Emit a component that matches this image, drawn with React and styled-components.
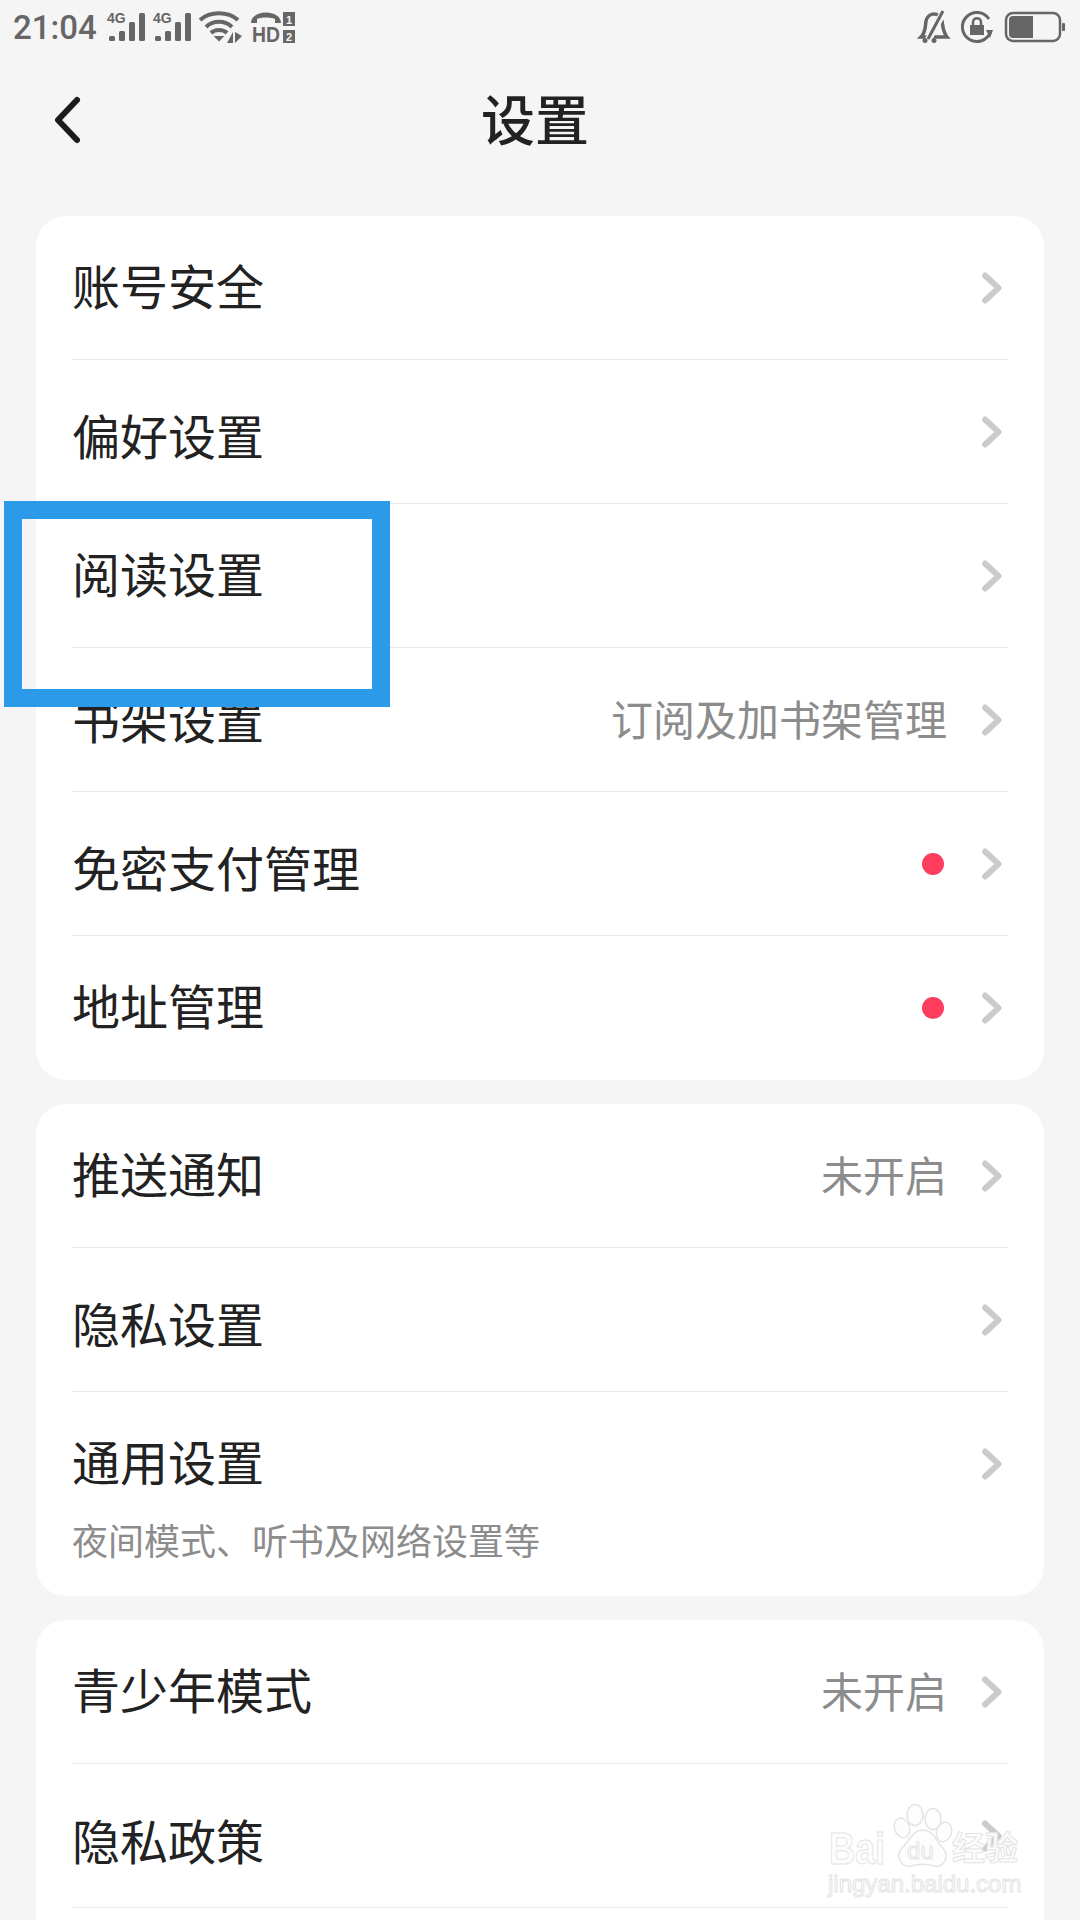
import React from 'react';
import styled, { createGlobalStyle } from 'styled-components';

const Global = createGlobalStyle`
html,body{margin:0;padding:0;background:#f5f5f5;}
`;
const Page = styled.div`
position:relative;
width:1080px;
height:1920px;
overflow:hidden;
background:#f5f5f5;
font-family:"Noto Sans CJK SC","Liberation Sans",sans-serif;
`;
const StatusBar = styled.div`
height:60px;
box-sizing:border-box;
display:flex;
align-items:center;
justify-content:space-between;
padding:0 15px 6px 13px;
color:#666;
svg{overflow:visible;}
`;
const StatusGroup = styled.div`
display:flex;
align-items:center;
gap:${p => p.$gap}px;
`;
const Clock = styled.span`
font-family:Roboto,"Liberation Sans",sans-serif;
font-size:33px;
font-weight:500;
margin-right:2px;
`;
const Header = styled.div`
height:120px;
margin-bottom:36px;
display:grid;
grid-template-columns:1fr auto 1fr;
align-items:center;
`;
const BackBtn = styled.svg`
margin-left:50px;
`;
const Title = styled.h1`
margin:0 10px 5px 0;
font-size:54px;
font-weight:500;
color:#222;
line-height:1;
`;
const Card = styled.div`
margin:0 36px ${p => p.$mb || 0}px;
background:#fff;
border-radius:30px;
padding:0 36px;
`;
const Row = styled.div`
box-sizing:border-box;
height:${p => p.$h || 144}px;
border-bottom:${p => p.$last ? 'none' : '1px solid #e9e9e9'};
`;
const RowMain = styled.div`
height:143px;
display:flex;
align-items:center;
`;
const RowLabel = styled.span`
font-size:48px;
color:#222;
line-height:1;
flex:1;
position:relative;
top:${p => p.$shift}px;
`;
const Sub = styled.div`
margin-top:-14px;
font-size:36px;
line-height:1;
color:#8c8c8c;
`;
const Note = styled.span`
font-size:42px;
line-height:1;
color:#8c8c8c;
margin-right:35px;
position:relative;
top:-2px;
`;
const Dot = styled.span`
width:22px;
height:22px;
border-radius:50%;
background:#ff3d5c;
margin-right:38px;
`;
const Chevron = styled.svg`
margin-right:6px;
flex:none;
`;
const Highlight = styled.div`
position:absolute;
left:4px;
top:501px;
width:386px;
height:206px;
box-sizing:border-box;
border:18px solid #2b9ae9;
`;
const Watermark = styled.div`
position:absolute;
left:826px;
top:1802px;
width:224px;
`;
const PawMark = styled.svg`
position:absolute;
left:64px;
top:-2px;
`;
const MarkLine = styled.div`
position:absolute;
white-space:nowrap;
line-height:1;
font-family:${p => p.$cjk ? '"Noto Sans CJK SC",sans-serif' : '"Liberation Sans",sans-serif'};
font-size:${p => p.$size}px;
left:${p => p.$x}px;
top:${p => p.$y}px;
font-weight:${p => p.$bold ? 700 : 400};
transform:scaleX(${p => p.$sx || 1});
transform-origin:left top;
color:#fdfdfd;
-webkit-text-stroke:1px #e4e4e4;
`;

const Arrow = () => (
  <Chevron width="20" height="32" viewBox="0 0 20 32" fill="none">
    <path d="M3 3.5 L16.5 16 L3 28.5" stroke="#cbcbcb" strokeWidth="6" strokeLinecap="round" strokeLinejoin="round" />
  </Chevron>
);

const Signal = () => (
  <svg width="38" height="30" viewBox="0 0 38 30" fill="#666">
    <text x="0" y="11" fontSize="14" fontWeight="700" fontFamily="Liberation Sans">4G</text>
    <rect x="2" y="24" width="6" height="5" rx="1.5" />
    <rect x="12" y="19" width="6" height="10" rx="1.5" />
    <rect x="22" y="10" width="6" height="19" rx="1.5" />
    <rect x="32" y="1" width="6" height="28" rx="1.5" />
  </svg>
);

const Wifi = () => (
  <svg width="44" height="32" viewBox="0 0 44 32" fill="none" stroke="#666" strokeWidth="4">
    <path d="M1 9 C11 0 29 0 39 9" />
    <path d="M7 16 C14 9 26 9 33 16" />
    <path d="M12 22 C16 18 24 18 28 22" />
    <path d="M17 26 L20 29 L23 26 Z" fill="#666" strokeWidth="2" />
    <path d="M34 21 L34 32 L28 32 Z M36 21 L36 32 L43 25 Z" fill="#666" stroke="none" />
  </svg>
);

const Hd = () => (
  <svg width="44" height="31" viewBox="0 0 44 31" fill="#666">
    <path d="M0 11 C0 -3 30 -3 30 11 L24 11 L24 7 C20 5 10 5 6 7 L6 11 Z" />
    <text x="1" y="30" fontSize="22" fontWeight="700" fontFamily="Liberation Sans" textLength="28" lengthAdjust="spacingAndGlyphs">HD</text>
    <rect x="32" y="0" width="12" height="14" />
    <rect x="32" y="18" width="12" height="13" />
    <text x="35" y="11.5" fontSize="11" fontWeight="700" fontFamily="Liberation Sans" fill="#f5f5f5">1</text>
    <text x="35" y="29" fontSize="11" fontWeight="700" fontFamily="Liberation Sans" fill="#f5f5f5">2</text>
  </svg>
);

const Bell = () => (
  <svg width="30" height="32" viewBox="0 0 30 32" fill="none" stroke="#666" strokeWidth="3.5">
    <path d="M2 26 C7 21 6 16 7 10 C8 5 12 3 15 3 C18 3 22 5 23 10 C24 16 24 21 28 26 Z" />
    <path d="M25 0 L8 31" stroke="#f5f5f5" strokeWidth="7" />
    <path d="M24 0 L9 28" strokeWidth="3" />
    <circle cx="6" cy="29.5" r="2.5" fill="#666" stroke="none" />
    <circle cx="15" cy="29.5" r="2.5" fill="#666" stroke="none" />
  </svg>
);

const RotateLock = () => (
  <svg width="32" height="32" viewBox="0 0 32 32" fill="none" stroke="#666" strokeWidth="3">
    <path d="M29.5 21 A14.5 14.5 0 1 1 28 8" />
    <path d="M25 19 L32 19 L29 27 Z" fill="#666" stroke="none" />
    <rect x="9" y="14" width="14" height="10" fill="#666" stroke="none" />
    <path d="M12 14 V11 C12 6 20 6 20 11 V14" strokeWidth="2.5" />
  </svg>
);

const Battery = () => (
  <svg width="60" height="30" viewBox="0 0 60 30" fill="none">
    <rect x="1" y="1" width="54" height="28" rx="7" stroke="#666" strokeWidth="2.5" />
    <path d="M8 4 H28 V26 H8 Q4 26 4 22 V8 Q4 4 8 4 Z" fill="#666" />
    <rect x="57" y="11" width="3" height="8" rx="1" fill="#666" />
  </svg>
);

const Paw = () => (
  <PawMark width="70" height="70" viewBox="0 0 70 70" fill="#fdfdfd" stroke="#e4e4e4" strokeWidth="1.5">
    <ellipse cx="25" cy="15" rx="8" ry="10.5" />
    <ellipse cx="43" cy="19" rx="8" ry="10.5" />
    <ellipse cx="12" cy="28" rx="7.5" ry="10" transform="rotate(-20 12 28)" />
    <ellipse cx="54" cy="32" rx="7.5" ry="10" transform="rotate(20 54 32)" />
    <path d="M33 30 C44 30 46 42 53 48 C60 56 54 68 44 66 C37 64 28 64 21 66 C11 68 5 56 12 48 C19 42 22 30 33 30 Z" />
  </PawMark>
);

const Mark = () => (
  <Watermark>
    <Paw />
    <MarkLine $size={44} $x={3} $y={25} $bold $sx={0.82}>Bai</MarkLine>
    <MarkLine $size={24} $x={81} $y={37}>du</MarkLine>
    <MarkLine $size={33} $x={126} $y={28} $cjk $bold>经验</MarkLine>
    <MarkLine $size={24} $x={2} $y={70}>jingyan.baidu.com</MarkLine>
  </Watermark>
);

const Item = ({ label, shift = -4, note, dot, sub, last, h }) => (
  <Row $last={last} $h={h}>
    <RowMain>
      <RowLabel $shift={shift}>{label}</RowLabel>
      {note && <Note>{note}</Note>}
      {dot && <Dot />}
      <Arrow />
    </RowMain>
    {sub && <Sub>{sub}</Sub>}
  </Row>
);

export default function App() {
  return (
    <Page>
      <Global />
      <StatusBar>
        <StatusGroup $gap={8}>
          <Clock>21:04</Clock>
          <Signal />
          <Signal />
          <Wifi />
          <Hd />
        </StatusGroup>
        <StatusGroup $gap={12}>
          <Bell />
          <RotateLock />
          <Battery />
        </StatusGroup>
      </StatusBar>
      <Header>
        <BackBtn width="32" height="56" viewBox="0 0 32 56" fill="none">
          <path d="M27 8 L8 28 L27 48" stroke="#1c1c1c" strokeWidth="6" strokeLinecap="round" strokeLinejoin="round" />
        </BackBtn>
        <Title>设置</Title>
      </Header>
      <Card $mb={24}>
        <Item label="账号安全" />
        <Item label="偏好设置" shift={2} />
        <Item label="阅读设置" />
        <Item label="书架设置" shift={-2} note="订阅及加书架管理" />
        <Item label="免密支付管理" shift={2} dot />
        <Item label="地址管理" dot last />
      </Card>
      <Card $mb={24}>
        <Item label="推送通知" note="未开启" />
        <Item label="隐私设置" shift={2} />
        <Item label="通用设置" sub="夜间模式、听书及网络设置等" last h={204} />
      </Card>
      <Card>
        <Item label="青少年模式" note="未开启" />
        <Item label="隐私政策" shift={3} />
        <Item />
      </Card>
      <Highlight />
      <Mark />
    </Page>
  );
}
